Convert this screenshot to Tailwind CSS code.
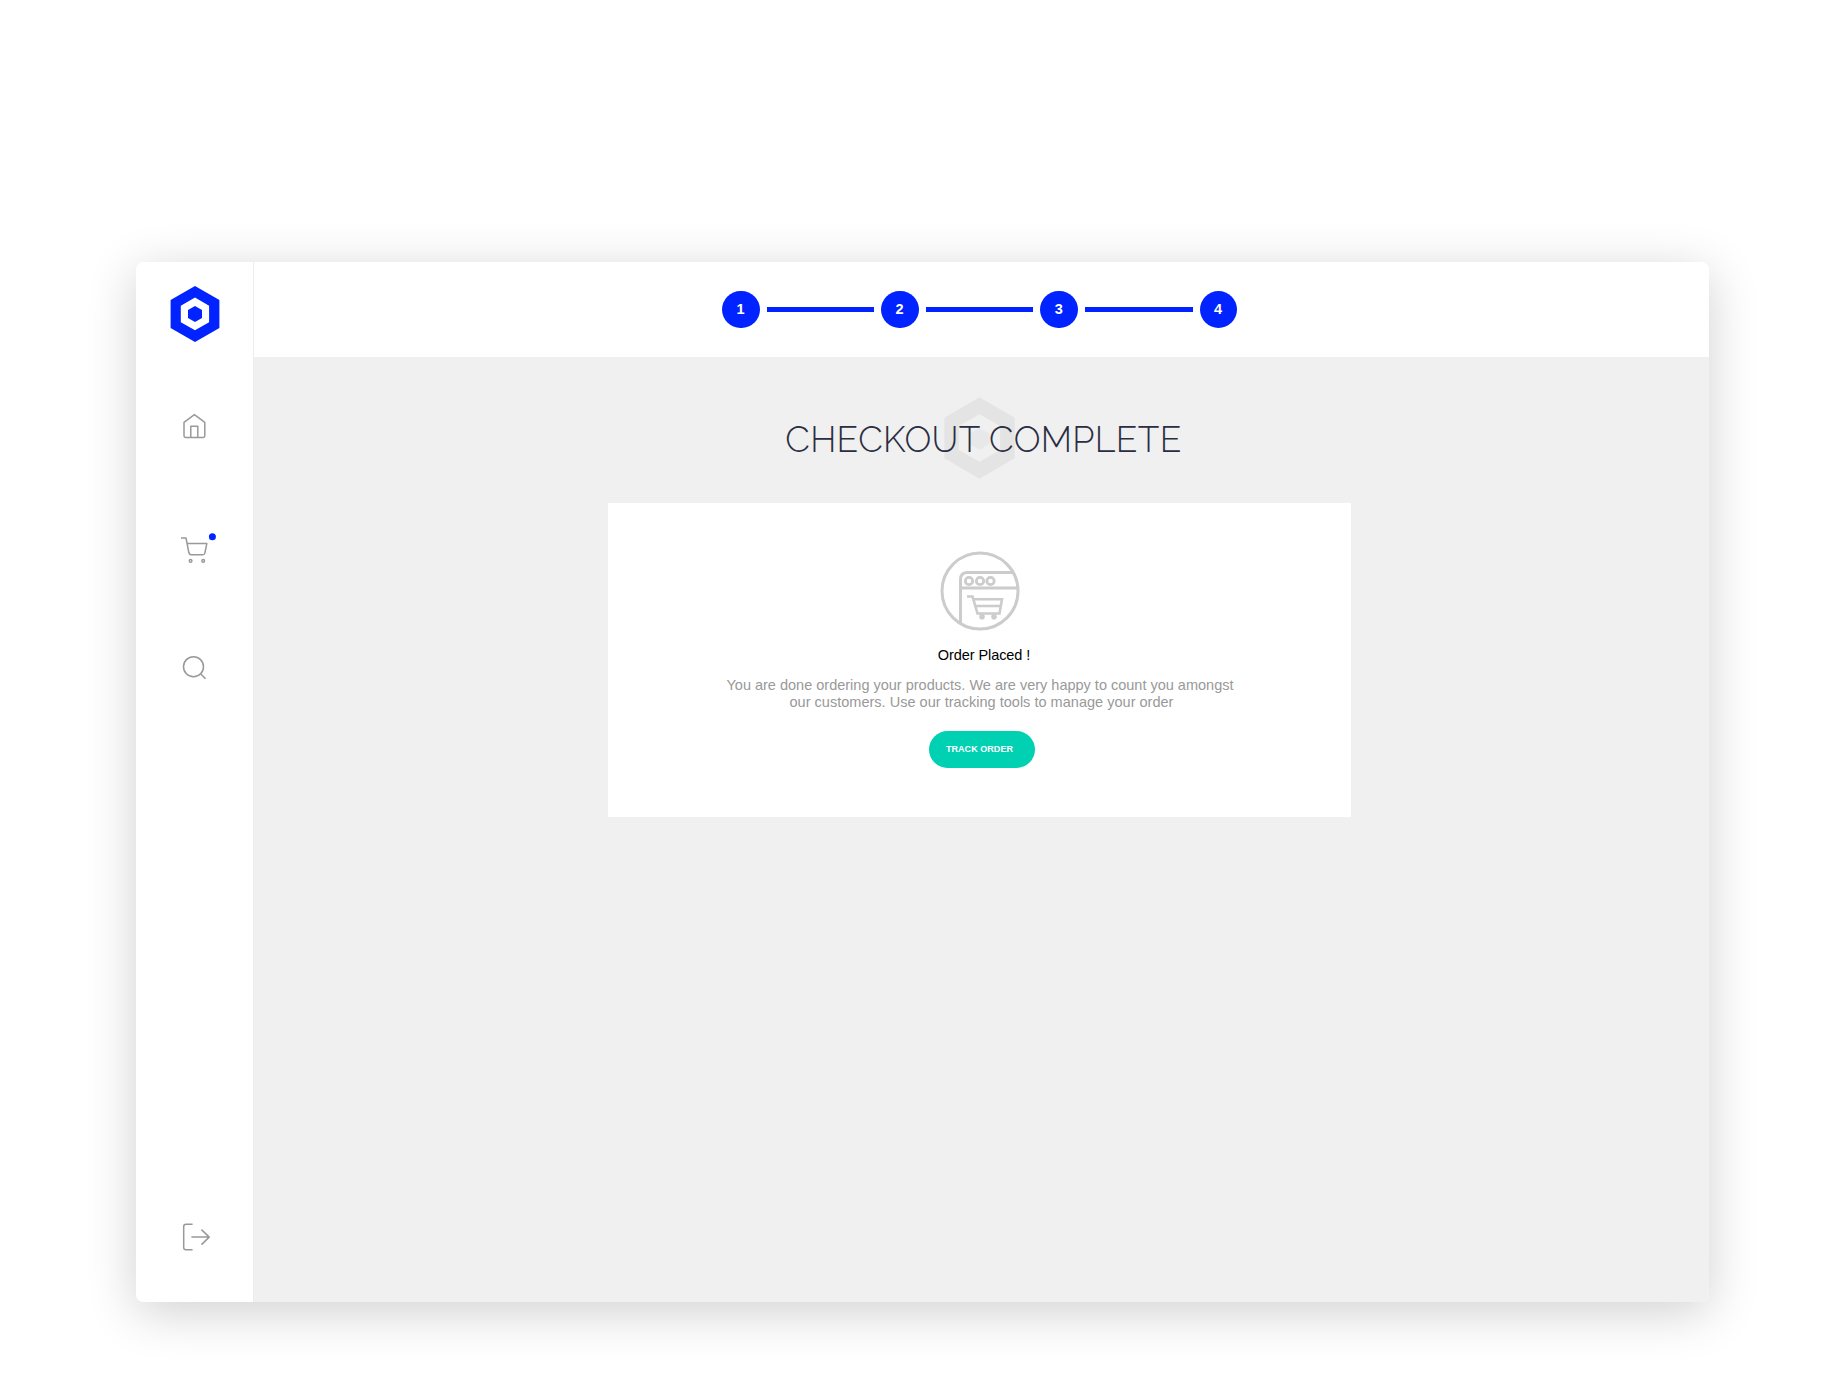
<!DOCTYPE html>
<html lang="en">
<head>
<meta charset="utf-8">
<title>Checkout complete</title>
<script src="https://cdn.jsdelivr.net/npm/@tailwindcss/browser@4"></script>
</head>
<body class="bg-white font-['Liberation_Sans',sans-serif]">
<div class="w-[1844px] h-[1383px] overflow-hidden pt-[261.5px] pl-[136px]">
  <div class="flex w-[1573px] h-[1040.5px] rounded-[7px] bg-white overflow-hidden shadow-[0_10px_50px_rgba(0,0,0,0.19)]">
    <aside class="flex flex-col w-[117.5px] shrink-0 border-r border-[#ececec] pt-[24.5px] pb-[50px]">
      <svg class="block ml-[34px] w-[50px] h-14 shrink-0" viewBox="0 0 50 56">
        <path fill="#0023ff" fill-rule="evenodd" d="M25 0 49.400 14V42L25 56 .6 42V14ZM25 11.6 10.8 19.8V36.2L25 44.3 39.1 36.2V19.8Z"/>
        <path fill="#0023ff" d="M25 19.9 32 24V32L25 36.1 18 32V24Z"/>
      </svg>
      <nav class="flex flex-col text-[#999]">
        <svg class="block mt-[68px] ml-10 w-10 h-8" viewBox="176 410 40 32" fill="none" stroke="currentColor" stroke-width="1.5" stroke-linejoin="round">
          <path d="M184 422.4 194.4 414.6 204.8 422.4V435.8Q204.8 437.4 203.2 437.4H185.6Q184 437.4 184 435.8ZM190.8 437.4V426.2H197.8V437.4"/>
        </svg>
        <svg class="block mt-[88px] ml-10 w-10 h-10" viewBox="176 530 40 40" fill="none" stroke="currentColor" stroke-width="1.5" stroke-linejoin="round">
          <path d="M181 538H186L188.900 552.8Q189.400 554.8 191.200 554.8H202.800Q204.600 554.8 204.900 553L206.800 543.6H187.200"/>
          <circle cx="190.600" cy="560.900" r="1.300"/><circle cx="203.200" cy="560.900" r="1.300"/>
          <circle cx="212.400" cy="536.700" r="3.500" fill="#0023ff" stroke="none"/>
        </svg>
        <svg class="block mt-[80px] ml-10 w-10 h-10" viewBox="176 650 40 40" fill="none" stroke="currentColor" stroke-width="1.5">
          <circle cx="193.500" cy="666.700" r="10"/><path d="M200.300 673.500 205.500 678.800"/>
        </svg>
      </nav>
      <svg class="block mt-auto ml-10 w-10 h-8 text-[#999]" viewBox="176 1220 40 32" fill="none" stroke="currentColor" stroke-width="1.5" stroke-linejoin="round">
        <path d="M192.600 1224.200H186Q183.700 1224.200 183.700 1226.500V1247.500Q183.700 1249.800 186 1249.800H192.600M191.400 1237.100H209M201.500 1229.600 209.200 1237.100 201.500 1244.600"/>
      </svg>
    </aside>
    <div class="flex flex-col flex-1">
      <header class="flex justify-center items-center h-[95.5px] pr-[3px] pt-[0.500px] text-white text-[14.500px] font-bold">
        <span class="flex items-center justify-center size-[37.800px] rounded-full bg-[#0023ff] pr-px">1</span>
        <i class="mx-[7px] w-[107.400px] h-[5px] bg-[#0023ff]"></i>
        <span class="flex items-center justify-center size-[37.800px] rounded-full bg-[#0023ff] pr-px">2</span>
        <i class="mx-[7px] w-[107.400px] h-[5px] bg-[#0023ff]"></i>
        <span class="flex items-center justify-center size-[37.800px] rounded-full bg-[#0023ff] pr-px">3</span>
        <i class="mx-[7px] w-[107.400px] h-[5px] bg-[#0023ff]"></i>
        <span class="flex items-center justify-center size-[37.800px] rounded-full bg-[#0023ff] pr-px">4</span>
      </header>
      <main class="flex flex-col flex-1 items-center bg-[#f0f0f0] pt-10 pr-[3.500px]">
        <div class="grid place-items-center w-[500px] h-[82px]">
          <svg class="col-start-1 row-start-1 w-[71px] h-[82px]" viewBox="0 0 71 82">
            <path fill="#e4e4e4" fill-rule="evenodd" d="M35.500 0.200 70.700 20.700V61.300L35.500 81.700 .3 61.300V20.700ZM35.500 17.200 14.800 29V53L35.500 64.700 56.200 53V29Z"/>
            <path fill="#e8e8e8" d="M35.500 31.200 45.700 36.700V46.700L35.500 52.700 25.300 46.700V36.700Z"/>
          </svg>
          <h1 class="col-start-1 row-start-1 pt-[3px] pl-[8px] font-['Raleway','Lato',sans-serif] font-light text-[35.500px] leading-[44px] tracking-[0.350px] text-[#2b2d42] whitespace-nowrap">CHECKOUT COMPLETE</h1>
        </div>
        <section class="flex flex-col items-center mt-[24px] w-[743px] h-[314px] bg-white pt-[48px]">
          <svg class="block size-20" viewBox="940 551 80 80" fill="none" stroke="#ccc" stroke-width="3">
            <circle cx="980" cy="591" r="38"/>
            <path d="M960.500 623V579.500Q960.500 572.500 967.500 572.500H1013.500M960.500 588H1018"/>
            <circle cx="969" cy="581" r="3.700" stroke-width="2.800"/><circle cx="980" cy="581" r="3.700" stroke-width="2.800"/><circle cx="990.500" cy="581" r="3.700" stroke-width="2.800"/>
            <path stroke-width="2.600" d="M967 596.500H972.500L977.500 613.500H999.500L1002 599.200H973.500M975 606H1000"/>
            <circle cx="982" cy="616.800" r="2.800" fill="#ccc" stroke="none"/><circle cx="994" cy="616.800" r="2.800" fill="#ccc" stroke="none"/>
          </svg>
          <h2 class="mt-[15px] pl-[9px] text-[14.500px] leading-[18px] tracking-[-0.070px] text-black">Order Placed !</h2>
          <p class="mt-[13px] pl-px text-center text-[14.500px] leading-[17.200px] text-[#999] whitespace-nowrap">You are done ordering your products. We are very happy to count you amongst<br><span class="pl-[3px] tracking-[0.020px]">our customers. Use our tracking tools to manage your order</span></p>
          <button class="mt-5 ml-[4px] w-[106px] h-[37px] rounded-full bg-[#00d1b2] pr-1 text-[9px] font-bold tracking-[0.050px] text-white">TRACK ORDER</button>
        </section>
      </main>
    </div>
  </div>
</div>
</body>
</html>
